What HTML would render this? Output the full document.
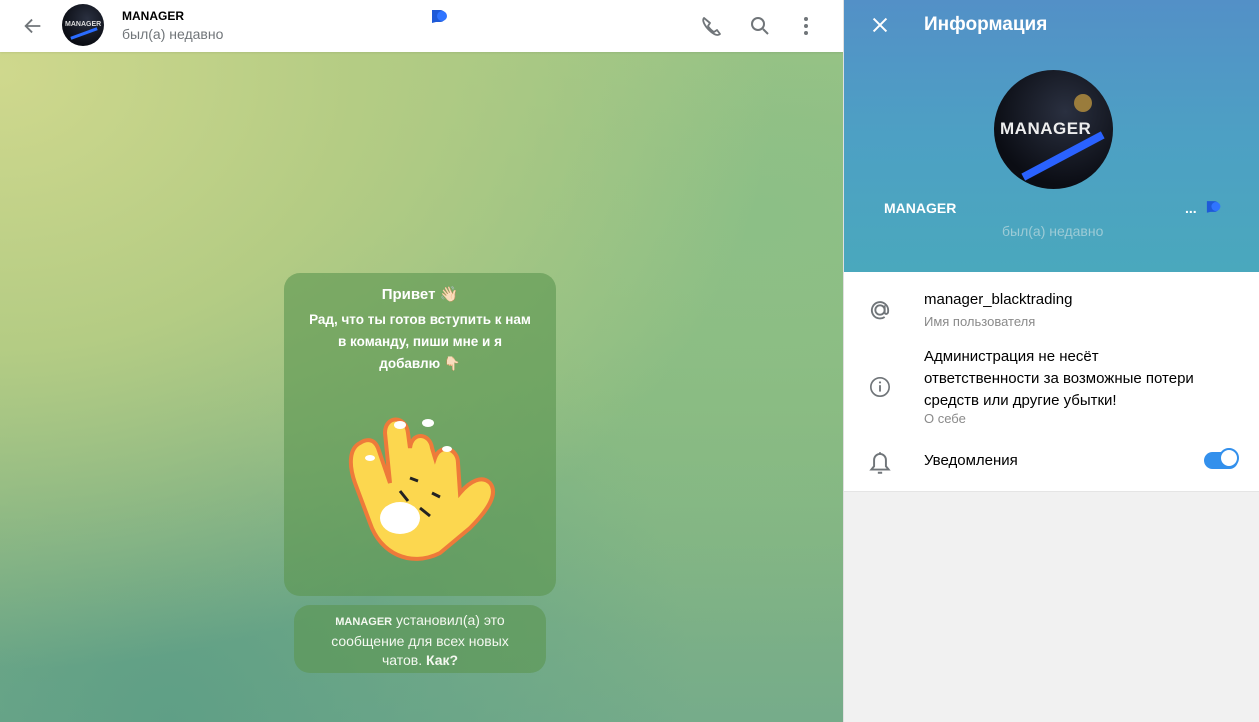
<!DOCTYPE html>
<html><head><meta charset="utf-8"><style>
*{margin:0;padding:0;box-sizing:border-box}
body{width:1259px;height:722px;overflow:hidden;font-family:"Liberation Sans",Roboto,sans-serif;position:relative;background:#fff}
#chat{position:absolute;left:0;top:0;width:843px;height:722px;background:radial-gradient(ellipse at 0% 10%,#cfd88d 0%,#b4cc84 30%,transparent 65%),radial-gradient(ellipse at 90% 30%,#8cbf86 0%,transparent 60%),radial-gradient(ellipse at 20% 100%,#5f9f86 0%,transparent 55%),linear-gradient(180deg,#a9c985 0%,#88b87f 55%,#76ac8a 100%)}
#hdr{position:absolute;left:0;top:0;width:843px;height:52px;background:#fff;box-shadow:0 1px 2px rgba(0,0,0,.08)}
.av{position:absolute;border-radius:50%;background:radial-gradient(circle at 60% 35%,#2a3040,#0b0d14 70%);overflow:hidden}
#panel{position:absolute;left:843px;top:0;width:416px;height:722px;background:#f1f1f1;border-left:1px solid #e0e0e0}
#phead{position:absolute;left:0;top:0;width:416px;height:272px;background:linear-gradient(180deg,#5390c7 0%,#4da0c4 50%,#4aa8bd 100%)}
#pinfo{position:absolute;left:0;top:272px;width:416px;height:220px;background:#fff;border-bottom:1px solid #e5e5e5}
.bub{position:absolute;background:rgba(92,150,80,.62);border-radius:16px;color:#fff;text-align:center;font-weight:bold;font-size:13.5px;line-height:22px}
.t{position:absolute;white-space:nowrap}
</style></head><body>
<div id="chat">
<div class="bub" style="left:284px;top:273px;width:272px;height:323px;padding-top:11px">
<div style="font-size:15px">Привет 👋🏻</div>
<div style="margin-top:3px">Рад, что ты готов вступить к нам<br>в команду, пиши мне и я<br>добавлю 👇🏻</div>
<svg width="170" height="170" viewBox="0 0 170 170" style="position:absolute;left:56px;top:130px">
<g stroke="#ee7a3a" stroke-width="4" fill="#fcd74f">
<path d="M20 40 C10 45 8 60 15 80 L30 120 C40 150 70 165 100 150 L130 125 C150 105 158 90 150 80 C142 72 130 78 120 90 L118 60 C118 45 100 40 95 55 L92 45 C90 30 72 28 70 45 L68 30 C66 12 45 12 45 30 L50 80 L38 45 C34 35 26 36 20 40Z"/>
</g>
<ellipse cx="60" cy="115" rx="20" ry="16" fill="#fff"/>
<ellipse cx="30" cy="55" rx="5" ry="3" fill="#fff"/><ellipse cx="60" cy="22" rx="6" ry="4" fill="#fff"/><ellipse cx="88" cy="20" rx="6" ry="4" fill="#fff"/><ellipse cx="107" cy="46" rx="5" ry="3" fill="#fff"/>
<path d="M70 75l8 3M92 90l8 4M60 88l8 10M80 105l10 8" stroke="#222" stroke-width="3" fill="none"/>
</svg>
</div>
<div class="bub" style="left:294px;top:605px;width:252px;height:68px;padding-top:6px;font-weight:normal;font-size:14px;line-height:19px;color:#f4f8f0"><b style="font-size:11px">MANAGER</b> установил(а) это<br>сообщение для всех новых<br>чатов. <b>Как?</b></div>
</div>
<div id="hdr">
<svg style="position:absolute;left:22px;top:15px" width="22" height="22" viewBox="0 0 24 24"><path d="M20 12H5M11 5l-7 7 7 7" stroke="#707579" stroke-width="2" fill="none"/></svg>
<div class="av" style="left:62px;top:4px;width:42px;height:42px"><span style="position:absolute;left:3px;top:17px;font-size:7px;color:#ddd;font-weight:bold">MANAGER</span><div style="position:absolute;left:8px;top:28px;width:28px;height:3px;background:#2a6cff;transform:rotate(-20deg)"></div></div>
<div class="t" style="left:122px;top:9px;font-size:12px;font-weight:bold;color:#000">MANAGER</div>
<div class="t" style="left:122px;top:26px;font-size:14px;color:#707579">был(а) недавно</div>
<svg style="position:absolute;left:431px;top:9px" width="20" height="14" viewBox="0 0 20 14"><path d="M1 1h8a6 6 0 010 12H5l-4 1z" fill="#1e5ad8"/><circle cx="11" cy="7" r="5" fill="#2f74ff"/></svg>
<svg style="position:absolute;left:699px;top:14px" width="24" height="24" viewBox="0 0 24 24"><path d="M5 4c-2 2 0 7 5 12s9 6 11 4l-3-4-3 2c-2-1-5-4-6-6l2-3z" stroke="#707579" stroke-width="1.8" fill="none" stroke-linejoin="round"/></svg>
<svg style="position:absolute;left:748px;top:14px" width="24" height="24" viewBox="0 0 24 24"><circle cx="10" cy="10" r="6" stroke="#707579" stroke-width="2" fill="none"/><path d="M15 15l5 5" stroke="#707579" stroke-width="2"/></svg>
<svg style="position:absolute;left:794px;top:14px" width="24" height="24" viewBox="0 0 24 24"><circle cx="12" cy="5" r="2" fill="#707579"/><circle cx="12" cy="12" r="2" fill="#707579"/><circle cx="12" cy="19" r="2" fill="#707579"/></svg>
</div>
<div id="panel">
<div id="phead">
<svg style="position:absolute;left:25px;top:14px" width="22" height="22" viewBox="0 0 24 24"><path d="M5 5l14 14M19 5L5 19" stroke="#fff" stroke-width="2.2"/></svg>
<div class="t" style="left:80px;top:14px;font-size:19px;font-weight:bold;color:#fff">Информация</div>
<div class="av" style="left:150px;top:70px;width:119px;height:119px"><span style="position:absolute;left:6px;top:49px;font-size:17px;color:#eee;font-weight:bold;letter-spacing:.5px">MANAGER</span><div style="position:absolute;left:24px;top:82px;width:90px;height:8px;background:#2a62ff;transform:rotate(-28deg)"></div><div style="position:absolute;left:80px;top:24px;width:18px;height:18px;border-radius:50%;background:#9a7c3c"></div></div>
<div class="t" style="left:40px;top:200px;font-size:14px;font-weight:bold;color:#fff">MANAGER</div>
<div class="t" style="left:341px;top:200px;font-size:14px;font-weight:bold;color:#fff">...</div>
<svg style="position:absolute;left:362px;top:200px" width="18" height="13" viewBox="0 0 20 14"><path d="M1 1h8a6 6 0 010 12H5l-4 1z" fill="#1e5ad8"/><circle cx="11" cy="7" r="5" fill="#2f74ff"/></svg>
<div class="t" style="left:158px;top:223px;font-size:14px;color:#9ccbd6">был(а) недавно</div>
</div>
<div id="pinfo">
<svg style="position:absolute;left:22px;top:24px" width="28" height="28" viewBox="0 0 24 24"><circle cx="12" cy="12" r="4" stroke="#707579" stroke-width="1.6" fill="none"/><path d="M16 8v6c0 2 3 2 3-1v-1a7 7 0 10-3 6" stroke="#707579" stroke-width="1.6" fill="none"/></svg>
<div class="t" style="left:80px;top:19px;font-size:15px;color:#000">manager_blacktrading</div>
<div class="t" style="left:80px;top:42px;font-size:13px;color:#8a8a8a">Имя пользователя</div>
<svg style="position:absolute;left:25px;top:104px" width="22" height="22" viewBox="0 0 24 24"><circle cx="12" cy="12" r="10" stroke="#707579" stroke-width="1.8" fill="none"/><path d="M12 10v7" stroke="#707579" stroke-width="2"/><circle cx="12" cy="7" r="1.2" fill="#707579"/></svg>
<div class="t" style="left:80px;top:74px;font-size:15px;line-height:22px;color:#000">Администрация не несёт<br>ответственности за возможные потери<br>средств или другие убытки!</div>
<div class="t" style="left:80px;top:139px;font-size:13px;color:#8a8a8a">О себе</div>
<svg style="position:absolute;left:23px;top:176px" width="26" height="28" viewBox="0 0 24 26"><path d="M4 20h16l-2.5-3v-6a5.5 5.5 0 00-11 0v6zM10 23h4M12 4v1.5" stroke="#707579" stroke-width="1.8" fill="none"/></svg>
<div class="t" style="left:80px;top:180px;font-size:15px;color:#000">Уведомления</div>
<div style="position:absolute;left:360px;top:180px;width:34px;height:17px;border-radius:9px;background:#3390ec"></div>
<div style="position:absolute;left:375px;top:176px;width:20px;height:20px;border-radius:50%;background:#fff;border:2px solid #3390ec"></div>
</div>
</div>
</body></html>
